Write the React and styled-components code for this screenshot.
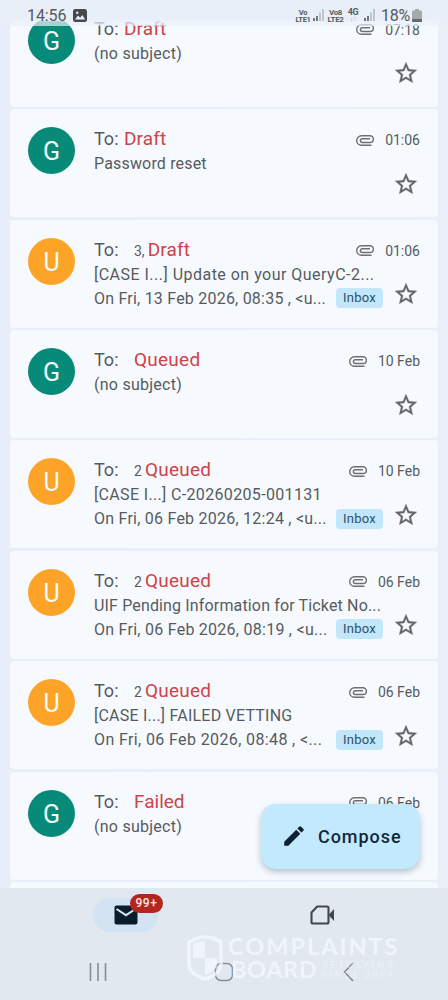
import React from "react";
import styled, { createGlobalStyle } from "styled-components";

const GlobalStyle = createGlobalStyle`
  * { box-sizing: border-box; }
  body { margin: 0; background: #e9eff8; font-family: Roboto, "Liberation Sans", sans-serif; }
`;

const Screen = styled.div`
  position: relative;
  display: flex;
  flex-direction: column;
  width: 448px;
  height: 1000px;
  overflow: hidden;
  background: linear-gradient(90deg, #e8edfa, #eaeff8);
`;

const StatusBar = styled.header`
  position: absolute;
  z-index: 2;
  top: 0;
  left: 0;
  right: 0;
  height: 26px;
  padding: 4px 26px 0 27px;
  display: flex;
  align-items: flex-start;
  color: #55595f;
  background: linear-gradient(#e9eff9 0 20px, rgba(233, 240, 249, 0.7) 22px 26px);
`;

const Clock = styled.span`
  font-size: 16px;
  line-height: 23px;
  letter-spacing: -0.1px;
  margin-right: 7px;
`;

const StatusIcon = styled.svg`
  display: block;
  flex: none;
  margin-top: ${(p) => p.$top || 0}px;
  margin-left: ${(p) => p.$left || 0}px;
`;

const Spacer = styled.div`
  flex: 1;
`;

const NetLabel = styled.span`
  display: flex;
  flex-direction: column;
  align-items: center;
  margin-top: 5px;
  margin-left: ${(p) => p.$left || 0}px;
  width: ${(p) => p.$w}px;
  font-size: ${(p) => p.$size || 7.5}px;
  font-weight: 700;
  line-height: 7px;
  letter-spacing: -0.35px;
  white-space: nowrap;
`;

const Faint = styled.span`
  font-size: 7px;
  opacity: 0.45;
`;

const Percent = styled.span`
  font-size: 16px;
  line-height: 23px;
  letter-spacing: -0.3px;
  margin-left: 6px;
  width: 31px;
`;

const List = styled.main`
  flex: none;
  height: 888px;
  padding: 0 10px;
  overflow: hidden;
`;

const Rows = styled.div`
  display: flex;
  flex-direction: column;
  gap: 2.4px;
  margin-top: -1.1px;
`;

const Card = styled.article`
  flex: none;
  display: flex;
  height: 108px;
  padding: 18px 17px 0 18px;
  border-radius: 4px;
  background: #f6faff;
`;

const Avatar = styled.div`
  flex: none;
  width: 47px;
  height: 47px;
  border-radius: 50%;
  display: flex;
  align-items: center;
  justify-content: center;
  padding-top: 2px;
  color: #f2fbf9;
  font-size: 25px;
  background: ${(p) => (p.$green ? "#078a77" : "#fda428")};
`;

const Body = styled.div`
  flex: 1;
  min-width: 0;
  margin-left: 19px;
  color: #565a60;
`;

const TopLine = styled.div`
  display: flex;
  align-items: baseline;
  height: 25px;
  line-height: 23px;
  white-space: nowrap;
`;

const To = styled.span`
  font-size: 18px;
  width: ${(p) => (p.$wide ? 40 : 30)}px;
`;

const Count = styled.span`
  font-size: 14px;
  margin-right: 3px;
`;

const State = styled.span`
  font-size: 19px;
  letter-spacing: ${(p) => p.$track}px;
  color: #cf4247;
`;

const Meta = styled.div`
  align-self: flex-start;
  margin-left: auto;
  margin-right: 1px;
  display: flex;
  align-items: center;
  gap: 11px;
  font-size: 14px;
  line-height: 26px;
`;

const Lower = styled.div`
  display: flex;
  justify-content: space-between;
`;

const Lines = styled.div`
  flex: none;
  width: 290px;
`;

const Line = styled.div`
  display: flex;
  align-items: center;
  justify-content: space-between;
  height: 24px;
  line-height: 24px;
  font-size: 16px;
  white-space: pre;
`;

const Run = styled.span`
  letter-spacing: ${(p) => p.$track || 0}px;
`;

const Label = styled.span`
  width: 47px;
  height: 20px;
  margin-right: 1px;
  margin-bottom: 1px;
  border-radius: 4px;
  text-align: center;
  font-size: 13px;
  line-height: 20px;
  letter-spacing: 0.25px;
  color: #2c5069;
  background: #c2e7fb;
`;

const Star = styled.svg`
  display: block;
  flex: none;
  margin-top: 18.5px;
  margin-right: 2.5px;
`;

const Compose = styled.button`
  position: absolute;
  z-index: 2;
  left: 261px;
  top: 804px;
  width: 159px;
  height: 65px;
  display: flex;
  align-items: center;
  padding: 0 0 1px 20px;
  gap: 11px;
  border: 0;
  border-radius: 15px;
  background: #c3e9ff;
  box-shadow: 0 3px 6px rgba(50, 70, 90, 0.32);
  color: #10283a;
  font: 500 18px Roboto, sans-serif;
  letter-spacing: 0.95px;
`;

const Nav = styled.nav`
  flex: none;
  height: 56px;
  display: flex;
  justify-content: space-between;
  padding: 10px 93px 0;
  background: #e2e8f0;
`;

const NavItem = styled.div`
  position: relative;
  width: 65px;
  height: 34px;
  border-radius: 17px;
  display: flex;
  align-items: center;
  justify-content: center;
  background: ${(p) => (p.$active ? "#d2e4f1" : "transparent")};
`;

const Badge = styled.span`
  position: absolute;
  left: 37px;
  top: -4px;
  width: 33px;
  height: 19px;
  border-radius: 10px;
  text-align: center;
  font-size: 12px;
  font-weight: 500;
  line-height: 19px;
  letter-spacing: 0.6px;
  color: #fbe9e7;
  background: #b3261e;
`;

const SystemBar = styled.footer`
  flex: 1;
  display: flex;
  justify-content: space-between;
  padding: 18px 90px 0 89px;
  background: #e2e8f0;
`;

const Watermark = styled.div`
  position: absolute;
  left: 187px;
  top: 935px;
  display: flex;
  gap: 5px;
  color: rgba(247, 250, 255, 0.72);
  font-family: Lato, sans-serif;
  font-weight: 700;
`;

const MarkText = styled.div`
  display: flex;
  flex-direction: column;
`;

const MarkName = styled.div`
  font-size: 23.5px;
  line-height: 23px;
  letter-spacing: ${(p) => p.$track || 0}px;
`;

const MarkRow = styled.div`
  display: flex;
  align-items: center;
  gap: 5px;
  padding-left: 3px;
`;

const Tagline = styled.div`
  font-size: 8.5px;
  line-height: 10px;
  letter-spacing: ${(p) => p.$track}px;
  opacity: 0.6;
`;

const Signal = ({ left }) => (
  <StatusIcon $top={5} $left={left} width="11" height="12" viewBox="0 0 11 12">
    <path d="M1 12V9M4 12V7" stroke="#66696e" strokeWidth="1.8" />
    <path d="M7 12V3.5M10 12V0" stroke="#b5bac2" strokeWidth="1.6" />
  </StatusIcon>
);

const Clip = () => (
  <svg width="18" height="11" viewBox="0 0 18 11" fill="none" stroke="#6c7076" strokeWidth="1.4">
    <path d="M15.5 10.200H5.400a4.700 4.700 0 0 1 0-9.400H14a3.300 3.300 0 0 1 0 6.700H6.300a1.900 1.900 0 0 1 0-3.800H14" />
  </svg>
);

const StarIcon = () => (
  <Star width="26" height="26" viewBox="0 0 24 24" fill="#62666b" stroke="#62666b" strokeWidth="0.3">
    <path d="M22 9.24l-7.19-.62L12 2 9.19 8.63 2 9.24l5.46 4.73L5.82 21 12 17.27 18.18 21l-1.63-7.03L22 9.24zM12 15.4l-3.76 2.27 1-4.28-3.32-2.88 4.38-.38L12 6.1l1.71 4.04 4.38.38-3.32 2.88 1 4.28L12 15.4z" />
  </Star>
);

const stateTrack = { Draft: 0.15, Queued: 0.25, Failed: 0 };

const mails = [
  { who: "G", state: "Draft", date: "07:18", subject: "(no subject)", subjectTrack: 0.25 },
  { who: "G", state: "Draft", date: "01:06", subject: "Password reset", subjectTrack: 0.17 },
  { who: "U", wide: true, count: "3,", state: "Draft", date: "01:06", subject: "[CASE I...] Update on your QueryC-2...", subjectTrack: 0.48, snippet: "On Fri, 13 Feb 2026, 08:35 , <u...", snippetTrack: 0.22 },
  { who: "G", wide: true, state: "Queued", date: "10 Feb", subject: "(no subject)", subjectTrack: 0.25 },
  { who: "U", wide: true, count: "2", state: "Queued", date: "10 Feb", subject: "[CASE I...] C-20260205-001131", subjectTrack: 0.34, snippet: "On Fri, 06 Feb 2026, 12:24 , <u...", snippetTrack: 0.24 },
  { who: "U", wide: true, count: "2", state: "Queued", date: "06 Feb", subject: "UIF Pending Information for Ticket No...", subjectTrack: 0.15, snippet: "On Fri, 06 Feb 2026, 08:19 , <u...", snippetTrack: 0.26 },
  { who: "U", wide: true, count: "2", state: "Queued", date: "06 Feb", subject: "[CASE I...] FAILED VETTING", subjectTrack: 0.22, snippet: "On Fri, 06 Feb 2026, 08:48 , <...", snippetTrack: 0.38 },
  { who: "G", wide: true, state: "Failed", date: "06 Feb", subject: "(no subject)", subjectTrack: 0.25 },
  { empty: true },
];

const Mail = ({ m }) =>
  m.empty ? (
    <Card />
  ) : (
    <Card>
      <Avatar $green={m.who === "G"}>{m.who}</Avatar>
      <Body>
        <TopLine>
          <To $wide={m.wide}>To:</To>
          {m.count && <Count>{m.count}</Count>}
          <State $track={stateTrack[m.state]}>{m.state}</State>
          <Meta>
            <Clip />
            <span>{m.date}</span>
          </Meta>
        </TopLine>
        <Lower>
          <Lines>
            <Line><Run $track={m.subjectTrack}>{m.subject}</Run></Line>
            {m.snippet && (
              <Line>
                <Run $track={m.snippetTrack}>{m.snippet}</Run>
                <Label>Inbox</Label>
              </Line>
            )}
          </Lines>
          <StarIcon />
        </Lower>
      </Body>
    </Card>
  );

export default function App() {
  return (
    <Screen>
      <GlobalStyle />
      <StatusBar>
        <Clock>14:56</Clock>
        <StatusIcon $top={5} width="14" height="13" viewBox="0 0 14 13">
          <rect width="14" height="13" rx="2.5" fill="#45494e" />
          <path d="M2 10.5l3-4 2.2 2.3 2-2.8 3 4.5z" fill="#e9eff9" />
          <circle cx="4.2" cy="3.8" r="1.2" fill="#e9eff9" />
        </StatusIcon>
        <Spacer />
        <NetLabel $w={14}><span>Vo</span><span>LTE1</span></NetLabel>
        <Signal left={3} />
        <NetLabel $w={17} $left={3} $size={8}><span>Vo8</span><span>LTE2</span></NetLabel>
        <NetLabel $w={12} $left={3} $size={9}><span>4G</span><Faint>↓↑</Faint></NetLabel>
        <Signal left={5} />
        <Percent>18%</Percent>
        <StatusIcon $top={5} width="10" height="13" viewBox="0 0 10 13">
          <path d="M3 0h4v1.5h2q1 0 1 1V12q0 1-1 1H1q-1 0-1-1V2.5q0-1 1-1h2z" fill="#a5a9ae" />
          <path d="M0 10h10v2q0 1-1 1H1q-1 0-1-1z" fill="#65696e" />
        </StatusIcon>
      </StatusBar>
      <List>
        <Rows>
          {mails.map((m, i) => <Mail key={i} m={m} />)}
        </Rows>
      </List>
      <Nav>
        <NavItem $active>
          <svg width="24" height="20" viewBox="0 0 24 20">
            <rect x="0.5" y="0.5" width="23" height="19" rx="2" fill="#0b1d2a" />
            <path d="M2.5 4l9.5 6.2L21.5 4" fill="none" stroke="#d1e5f4" strokeWidth="2" />
          </svg>
          <Badge>99+</Badge>
        </NavItem>
        <NavItem>
          <svg width="25" height="20" viewBox="0 0 25 20">
            <path d="M7.2 1.5H17q1.5 0 1.5 1.5v14q0 1.5-1.5 1.5H3q-1.5 0-1.5-1.5V7.5z" fill="none" stroke="#42474e" strokeWidth="2.1" strokeLinejoin="round" />
            <path d="M18.500 10L24 4v12z" fill="#42474e" />
          </svg>
        </NavItem>
      </Nav>
      <SystemBar>
        <svg width="18" height="20" viewBox="0 0 18 20" stroke="#8a8e94" strokeWidth="1.6">
          <path d="M1.5 1v18M9 1v18M16.5 1v18" />
        </svg>
        <svg width="20" height="20" viewBox="0 0 20 20" fill="none" stroke="#8c9095" strokeWidth="1.5">
          <rect x="1.5" y="1.5" width="17" height="17" rx="5.5" />
        </svg>
        <svg width="18" height="20" viewBox="0 0 18 20" fill="none" stroke="#83878c" strokeWidth="1.5">
          <path d="M13 1L4.5 10L13 19" />
        </svg>
      </SystemBar>
      <Watermark>
        <svg width="36" height="46" viewBox="0 0 36 46">
          <path d="M18 2q8 0 16 5v22q0 10-16 15Q2 39 2 29V7q8-5 16-5z" fill="none" stroke="currentColor" strokeWidth="3.5" />
          <path d="M18 6v17H6V9q6-3 12-3zM18 23h12v6q0 7-12 11z" fill="currentColor" />
        </svg>
        <MarkText>
          <MarkName $track={2}>COMPLAINTS</MarkName>
          <MarkRow>
            <MarkName $track={0.6}>BOARD</MarkName>
            <div>
              <Tagline $track={3}>RESOLVING</Tagline>
              <Tagline $track={2.7}>SINCE 2004</Tagline>
            </div>
          </MarkRow>
        </MarkText>
      </Watermark>
      <Compose>
        <svg width="26" height="26" viewBox="0 0 24 24" fill="#0b2233">
          <path d="M3 17.25V21h3.75L17.81 9.94l-3.75-3.75L3 17.25zM20.71 7.04a1 1 0 0 0 0-1.41l-2.34-2.34a1 1 0 0 0-1.41 0l-1.83 1.83 3.75 3.75 1.83-1.83z" />
        </svg>
        Compose
      </Compose>
    </Screen>
  );
}
